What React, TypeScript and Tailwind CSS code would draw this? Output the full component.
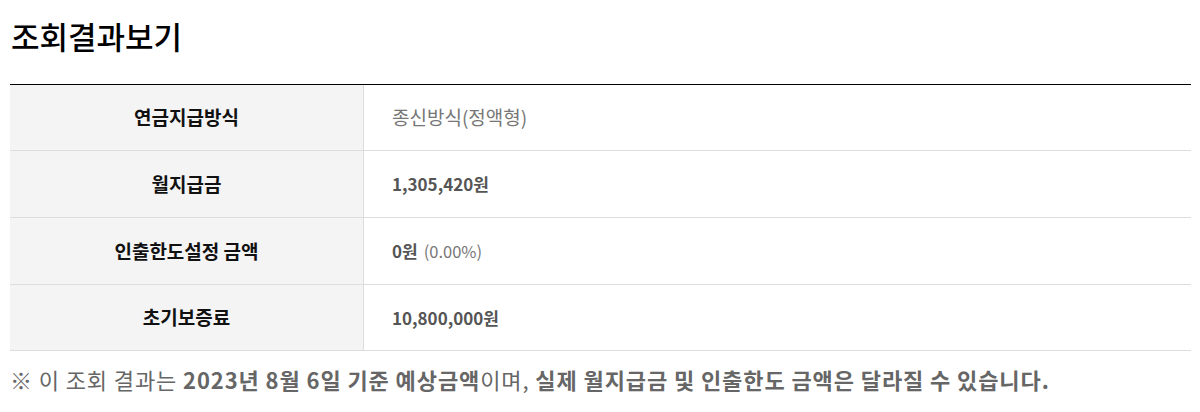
import React from "react";

const F = { fontFamily: '"Noto Sans CJK KR", "Noto Sans", sans-serif' };

export default function App() {
  const rows: { label: string; h: string; value: React.ReactNode }[] = [
    { label: "연금지급방식", h: "h-[66px]", value: <span className="text-[19px] text-[#777]">종신방식(정액형)</span> },
    { label: "월지급금", h: "h-[67px]", value: <span className="font-bold text-[#555]">1,305,420원</span> },
    {
      label: "인출한도설정 금액",
      h: "h-[67px]",
      value: (
        <span className="flex items-baseline">
          <span className="font-bold text-[#555]">0원</span>
          <span className="ml-[6px] text-[16.5px] text-[#777]">(0.00%)</span>
        </span>
      ),
    },
    { label: "초기보증료", h: "h-[66px]", value: <span className="font-bold text-[#555]">10,800,000원</span> },
  ];
  return (
    <div className="w-[1200px] bg-white pl-[10px] pr-[9px]" style={F}>
      <h2 className="pt-[14px] pl-[1px] text-[31px] leading-[44px] font-medium text-black">조회결과보기</h2>
      <div className="mt-[26px] border-t border-black">
        {rows.map((r) => (
          <div key={r.label} className={`flex border-b border-[#ddd] ${r.h}`}>
            <div className="flex w-[354px] items-center justify-center border-r border-[#ddd] bg-[#f4f4f4] text-[19px] font-bold text-[#111]">
              {r.label}
            </div>
            <div className="flex flex-1 items-center pl-[28px] text-[17px]">{r.value}</div>
          </div>
        ))}
      </div>
      <p className="mt-[14px] text-[22px] leading-[28px] tracking-[0.9px] text-[#666]">
        ※ 이 조회 결과는 <b>2023년 8월 6일 기준 예상금액</b>이며, <b>실제 월지급금 및 인출한도 금액은 달라질 수 있습니다.</b>
      </p>
    </div>
  );
}
